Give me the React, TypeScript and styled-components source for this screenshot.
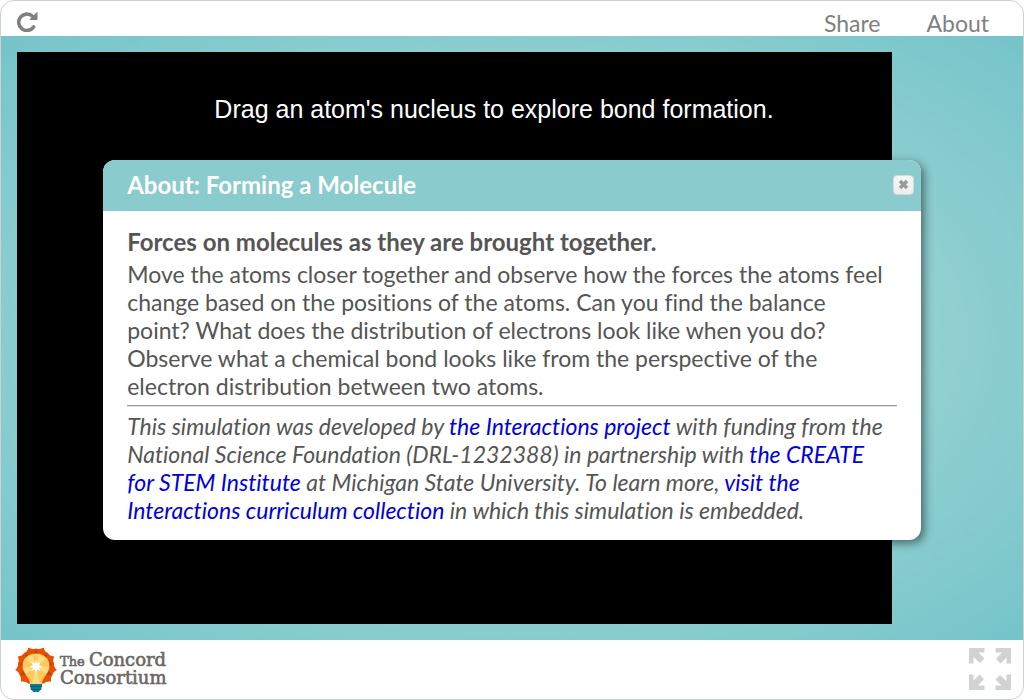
import React, { useState } from "react";
import styled, { createGlobalStyle } from "styled-components";

const GlobalStyle = createGlobalStyle`
  *, *::before, *::after { box-sizing: border-box; }
  body {
    margin: 0;
    background: #fff;
    font-family: Lato, sans-serif;
    font-variant-ligatures: no-common-ligatures;
  }
`;

const Frame = styled.div`
  position: relative;
  display: flex;
  flex-direction: column;
  min-height: 100vh;
  border: 1px solid #ccd2d2;
  border-radius: 14px;
  overflow: hidden;
  background: #fff;
`;

const TopBar = styled.header`
  display: flex;
  align-items: center;
  justify-content: space-between;
  height: 35px;
  padding: 4px 34px 0 15px;
`;

const IconButton = styled.button`
  display: flex;
  padding: 0;
  border: 0;
  background: none;
  color: #808080;
  cursor: pointer;
`;

const Nav = styled.nav`
  display: flex;
  gap: 46px;
  padding-top: 4px;
`;

const NavLink = styled.a`
  color: #808080;
  font-size: 23px;
  line-height: 28px;
  text-decoration: none;
`;

const Stage = styled.main`
  display: flex;
  flex: 1;
  padding: 16px;
  background: radial-gradient(ellipse at center, #b9e0da 0%, #75c4ca 100%);
`;

const Simulation = styled.section`
  width: calc(100% - 115px);
  padding: 43px 0 0 79px;
  background: #000;
  color: #fff;
  font-family: "Liberation Sans", Arial, sans-serif;
  font-size: 25px;
  line-height: 29px;
  text-align: center;
`;

const Hint = styled.p`
  margin: 0;
`;

const Footer = styled.footer`
  display: flex;
  align-items: center;
  justify-content: space-between;
  height: 59px;
  padding: 0 11px 2px 13px;
`;

const LogoLink = styled.a`
  display: flex;
  align-items: center;
  gap: 2px;
  color: #6a6765;
  text-decoration: none;
`;

const LogoName = styled.span`
  font-family: "DejaVu Serif", serif;
  font-size: 18px;
  line-height: 16px;
  -webkit-text-stroke: 0.6px #6a6765;
`;

const LogoSmall = styled.span`
  font-size: 13px;
`;

const LogoLine = styled.span`
  display: block;
  white-space: nowrap;
`;

const Overlay = styled.div`
  position: absolute;
  inset: 0;
  display: flex;
  align-items: center;
  justify-content: center;
`;

const Dialog = styled.section`
  width: 80%;
  border-radius: 12px;
  overflow: hidden;
  background: #fff;
  color: #555;
  box-shadow: 3px 3px 10px rgba(0, 0, 0, 0.5);
`;

const DialogHeader = styled.header`
  display: flex;
  align-items: center;
  justify-content: space-between;
  height: 51px;
  padding: 0 7px 2px 24px;
  background: #8acbcd;
`;

const DialogTitle = styled.h1`
  margin: 0;
  color: #fff;
  font-size: 24px;
  font-weight: 700;
  line-height: 28px;
`;

const CloseButton = styled.button`
  display: flex;
  align-items: center;
  justify-content: center;
  width: 21px;
  height: 20px;
  padding: 0;
  border: 1px solid #d8d8d8;
  border-radius: 4px;
  background: linear-gradient(#f6f6f6, #ededed);
  color: #999;
  cursor: pointer;
`;

const DialogBody = styled.div`
  padding: 17px 24px 16px;
  font-size: 23px;
  line-height: 28px;
`;

const Subtitle = styled.h2`
  margin: 0 0 4px;
  font-size: 24px;
  font-weight: 700;
  line-height: 28px;
`;

const Paragraph = styled.p`
  margin: 0;
  padding-right: 8px;
`;

const Divider = styled.hr`
  height: 2px;
  margin: 5px 0;
  border: 0;
  border-top: 1px solid #949494;
  border-bottom: 1px solid #e4e4e4;
`;

const Credits = styled(Paragraph)`
  font-style: italic;
`;

const TextLink = styled.a`
  color: #0000dd;
  text-decoration: none;
`;

const ReloadIcon = () => (
  <svg width="22" height="22" viewBox="0 0 22 22" aria-hidden="true">
    <path d="M17.6 17A8.200 8.200 0 1 1 16.200 6" fill="none" stroke="currentColor" strokeWidth="3.6" strokeLinecap="round" />
    <path d="M21 2.500v7h-7z" fill="currentColor" stroke="currentColor" strokeLinejoin="round" />
  </svg>
);

const CloseIcon = () => (
  <svg width="11" height="11" viewBox="0 0 11 11" aria-hidden="true">
    <path d="M2 2l7 7M9 2l-7 7" stroke="currentColor" strokeWidth="3.4" />
  </svg>
);

const ExpandIcon = () => (
  <svg width="44" height="44" viewBox="0 0 44 44" fill="#d0d2d3" aria-hidden="true">
    {[0, 90, 180, 270].map((angle) => (
      <path
        key={angle}
        transform={`rotate(${angle} 22 22)`}
        d="M1 1H16.500V5.500H10.500L16.500 11.500L12 16L5.500 10V16.500H1z"
      />
    ))}
  </svg>
);

const BulbLogo = () => (
  <svg width="44" height="48" viewBox="0 0 44 48" aria-hidden="true">
    {[-134, -98, -60, -21, 21, 60, 98, 134].map((angle) => (
      <path key={angle} transform={`rotate(${angle} 22 22)`} d="M22 24L14 12Q13.500 7 15 5Q19 5 22 1Q25 5 29 5Q30.500 7 30 12z" fill="#e65100" />
    ))}
    {[-116, -79, -40, 0, 40, 79, 116].map((angle) => (
      <path key={angle} transform={`rotate(${angle} 22 22)`} d="M22 23L18 11L22 5L26 11z" fill="#c23f14" />
    ))}
    <path d="M22 8.500C14 8.500 8.500 13.500 8.500 21C8.500 29 16 32 16 39H28C28 32 35.500 29 35.500 21C35.500 13.500 30 8.500 22 8.500z" fill="#fdc95d" />
    <path d="M22 21L12 15L18 9zM22 21L25 9L32 14zM22 21L35 22L32 29zM22 21L9 23L12 29zM22 21L18 39H26z" fill="#ffdb86" />
    <path d="M22 15l1.300 3.500 3.400-1.700-1.700 3.400 3.500 1.300-3.500 1.300 1.700 3.400-3.400-1.700-1.300 3.500-1.300-3.500-3.400 1.700 1.700-3.400-3.500-1.300 3.500-1.300-1.700-3.400 3.400 1.700z" fill="#fff" />
    <path d="M16 39H28V41L27 42L28 43L26 45L25 47H19L18 45L16 43L17 42L16 41z" fill="#087f96" />
    <path d="M16 41.500H28M17 44.500H27" stroke="#045b72" />
  </svg>
);

export default function App() {
  const [aboutOpen, setAboutOpen] = useState(true);
  return (
    <Frame>
      <GlobalStyle />
      <TopBar>
        <IconButton aria-label="Reload">
          <ReloadIcon />
        </IconButton>
        <Nav>
          <NavLink href="#share">Share</NavLink>
          <NavLink href="#about" onClick={() => setAboutOpen(true)}>About</NavLink>
        </Nav>
      </TopBar>
      <Stage>
        <Simulation>
          <Hint>Drag an atom's nucleus to explore bond formation.</Hint>
        </Simulation>
      </Stage>
      <Footer>
        <LogoLink href="#home">
          <BulbLogo />
          <LogoName>
            <LogoLine><LogoSmall>The </LogoSmall>Concord</LogoLine>
            <LogoLine>Consortium</LogoLine>
          </LogoName>
        </LogoLink>
        <IconButton aria-label="Full screen">
          <ExpandIcon />
        </IconButton>
      </Footer>
      {aboutOpen && (
        <Overlay>
          <Dialog role="dialog" aria-labelledby="about-title">
            <DialogHeader>
              <DialogTitle id="about-title">About: Forming a Molecule</DialogTitle>
              <CloseButton aria-label="Close" onClick={() => setAboutOpen(false)}>
                <CloseIcon />
              </CloseButton>
            </DialogHeader>
            <DialogBody>
              <Subtitle>Forces on molecules as they are brought together.</Subtitle>
              <Paragraph>
                Move the atoms closer together and observe how the forces the atoms feel change based on the
                positions of the atoms. Can you find the balance point? What does the distribution of electrons
                look like when you do? Observe what a chemical bond looks like from the perspective of the
                electron distribution between two atoms.
              </Paragraph>
              <Divider />
              <Credits>
                This simulation was developed by <TextLink href="#interactions">the Interactions project</TextLink> with
                funding from the National Science Foundation (DRL-1232388) in partnership
                with <TextLink href="#create">the CREATE for STEM Institute</TextLink> at Michigan State University. To
                learn more, <TextLink href="#curriculum">visit the Interactions curriculum collection</TextLink> in
                which this simulation is embedded.
              </Credits>
            </DialogBody>
          </Dialog>
        </Overlay>
      )}
    </Frame>
  );
}
